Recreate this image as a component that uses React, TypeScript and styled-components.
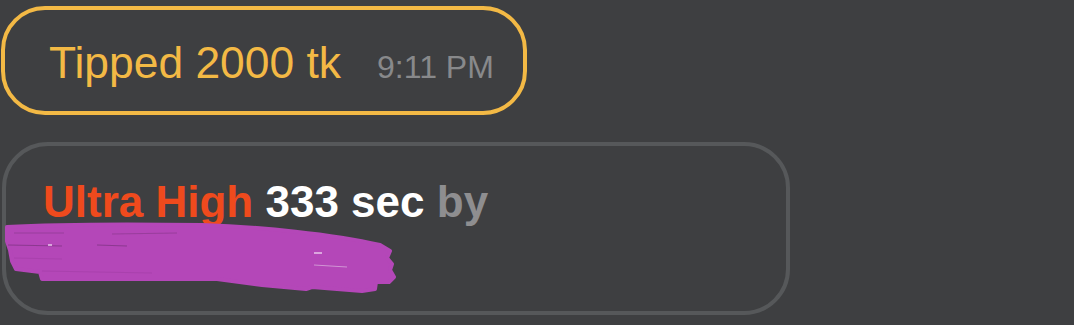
import styled, { createGlobalStyle } from "styled-components"

const GlobalStyle = createGlobalStyle`
    html, body {
        margin: 0;
        padding: 0;
        background-color: #3e3f41;
    }
    body {
        font-family: "Liberation Sans", Arial, Helvetica, sans-serif;
    }
`

const Feed = styled.div`
    display: flex;
    flex-direction: column;
    align-items: flex-start;
    gap: 27px;
    padding: 6px 0 0 1px;
    min-height: 325px;
    box-sizing: border-box;
    background-color: #3e3f41;
`

const TipPill = styled.div`
    display: inline-flex;
    align-items: baseline;
    gap: 36px;
    box-sizing: border-box;
    height: 109px;
    padding: 31px 29px 0 44px;
    border: 4px solid #f3b945;
    border-radius: 44px;
`

const TipText = styled.span`
    font-size: 44.4px;
    line-height: 44px;
    color: #f3b945;
    white-space: nowrap;
`

const Time = styled.span`
    font-size: 32px;
    line-height: 32px;
    color: #88898b;
    white-space: nowrap;
`

const EventCard = styled.div`
    display: flex;
    flex-direction: column;
    box-sizing: border-box;
    width: 788px;
    height: 173px;
    margin-left: 1px;
    padding: 34px 0 0 37px;
    border: 4px solid #56585a;
    border-radius: 46px;
`

const EventLine = styled.div`
    font-size: 44px;
    line-height: 44px;
    font-weight: 700;
    white-space: nowrap;
`

const Word = styled.span<{ $tone: "level" | "value" | "muted" }>`
    color: ${({ $tone }) =>
        $tone === "level" ? "#ef4a1d" : $tone === "value" ? "#ffffff" : "#8e8e90"};
`

const Redaction = styled.svg`
    display: block;
    width: 400px;
    height: 75px;
    margin: -3px 0 0 -41px;
`

function Scribble() {
    return (
        <Redaction viewBox="0 220 400 75">
            <path
                d="M5 226 C40 224 120 223 200 224 C260 226 330 233 378 244 L388 250 L385 257 L390 263 L388 269 L392 276 L387 281 L374 281 L373 288 L360 290 L310 286 L304 288 L260 284 L215 278 L120 278 L40 278 L38 271 L14 268 L10 260 L8 249 L5 240 Z"
                fill="#b447b8"
                stroke="#b447b8"
                strokeWidth={4}
                strokeLinejoin="round"
            />
            <path d="M12 232 L62 232 M110 233 L175 232" stroke="#8e3a91" strokeWidth={1.2} opacity={0.7} />
            <path d="M6 244 L60 245 M95 244 L125 245" stroke="#7c3380" strokeWidth={1.2} opacity={0.7} />
            <path d="M46 244 L50 244 M312 252 L320 252" stroke="#e7c6ea" strokeWidth={1.4} />
            <path d="M312 264 L345 266" stroke="#d9a8dc" strokeWidth={1} opacity={0.8} />
            <path d="M12 257 L60 258 M40 270 L150 272" stroke="#a33ea7" strokeWidth={1} opacity={0.6} />
        </Redaction>
    )
}

export default function App() {
    return (
        <>
            <GlobalStyle />
            <Feed>
                <TipPill>
                    <TipText>Tipped 2000 tk</TipText>
                    <Time>9:11 PM</Time>
                </TipPill>
                <EventCard>
                    <EventLine>
                        <Word $tone="level">Ultra High</Word> <Word $tone="value">333 sec</Word>{" "}
                        <Word $tone="muted">by</Word>
                    </EventLine>
                    <Scribble />
                </EventCard>
            </Feed>
        </>
    )
}
